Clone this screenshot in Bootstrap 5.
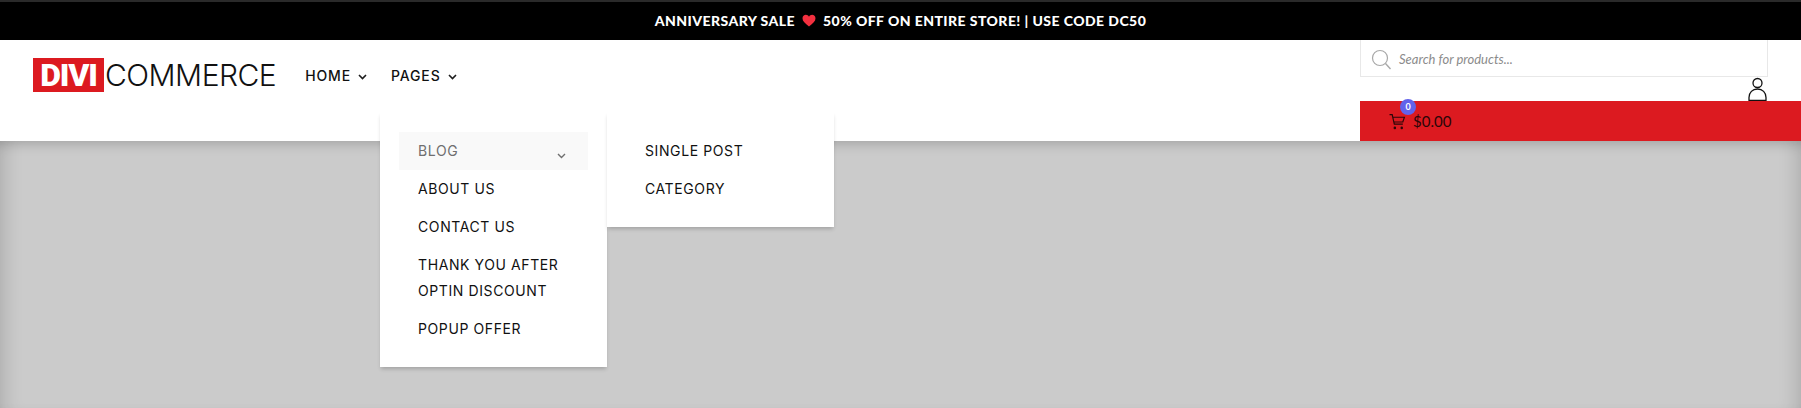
<!DOCTYPE html>
<html lang="en">
<head>
  <meta charset="UTF-8">
  <meta name="viewport" content="width=device-width, initial-scale=1.0">
  <title>Divi Commerce</title>
  <link href="https://cdn.jsdelivr.net/npm/bootstrap@5.3.0/dist/css/bootstrap.min.css" rel="stylesheet">
  <style>
    body {
      background-color: #cbcbcb;
      font-family: Inter, "Liberation Sans", sans-serif;
      overflow: hidden;
    }
    .promo-bar {
      height: 40px;
      background-color: #000;
      border-top: 2px solid #2a2a2a;
      padding-bottom: 2px;
      color: #fff;
      font-family: Lato, "Liberation Sans", sans-serif;
      font-size: 14px;
      font-weight: 900;
      letter-spacing: .44px;
    }
    .promo-bar svg {
      margin: 0 7px;
    }
    .site-header {
      height: 101px;
      background-color: #fff;
      z-index: 2;
    }
    .brand-area {
      padding: 18px 0 0 33px;
    }
    .brand-box {
      width: 71px;
      height: 34px;
      background-color: #dc1a20;
      color: #fff;
      font-family: Roboto, sans-serif;
      font-size: 32px;
      font-weight: 900;
      letter-spacing: -1.2px;
    }
    .brand-word {
      margin-left: 1px;
      color: #111;
      font-size: 30px;
      font-weight: 300;
      letter-spacing: -.5px;
      line-height: 35px;
    }
    .main-links {
      margin-left: 29px;
      gap: 24px;
      height: 34px;
    }
    .main-links a, .fly-menu a {
      color: #111;
      font-size: 14px;
      letter-spacing: .85px;
      text-decoration: none;
    }
    .main-links a {
      font-weight: 500;
    }
    .main-links svg {
      margin-left: 7px;
    }
    .shop-area {
      width: 441px;
    }
    .search-box {
      width: 408px;
      height: 37px;
      border: 1px solid #e8e8e8;
      border-top: 0;
      padding: 3px 0 0 10px;
      gap: 7px;
      color: #8b8b8b;
      font-family: Lato, sans-serif;
      font-size: 13px;
      font-style: italic;
    }
    .account-row {
      height: 24px;
      padding-right: 34px;
    }
    .cart-bar {
      height: 40px;
      background-color: #dc1a20;
      padding-left: 29px;
      gap: 7px;
      color: #2a0608;
      font-family: Lato, sans-serif;
      font-size: 15px;
    }
    .cart-count {
      top: -2px;
      left: 40px;
      width: 16px;
      height: 16px;
      background-color: #6262ea;
      color: #fff;
      font-size: 9px;
      font-weight: 700;
    }
    .fly-menu {
      width: 227px;
      background-color: #fff;
      box-shadow: 0 3px 4px -1px rgba(0, 0, 0, .2);
      z-index: 3;
      top: 112px;
    }
    .menu-first {
      left: 380px;
      height: 255px;
      padding: 20px 19px;
    }
    .menu-second {
      left: 607px;
      height: 115px;
      padding: 20px 19px 0 38px;
    }
    .fly-menu a {
      display: block;
      padding: 6px 19px;
      line-height: 26px;
      position: relative;
      letter-spacing: .6px;
    }
    .menu-second a {
      padding-left: 0;
    }
    .fly-menu a.is-open {
      background-color: #f9f9f9;
      color: #6f6f6f;
    }
    .is-open svg {
      position: absolute;
      right: 22px;
      top: 21px;
    }
    .page-shade {
      height: 267px;
      background-color: #cbcbcb;
      box-shadow: inset 0 10px 12px -6px rgba(0, 0, 0, .16), inset 18px 0 16px -10px rgba(0, 0, 0, .1), inset -18px 0 16px -10px rgba(0, 0, 0, .1);
    }
  </style>
</head>
<body>
  <div class="promo-bar d-flex align-items-center justify-content-center">
    <span>ANNIVERSARY SALE</span>
    <svg width="14" height="13" viewBox="0 0 14 13"><path d="M7 12.5C3 9.5.5 7.300.5 4.300.5 2.200 2.100.8 3.900.8 5.200.8 6.300 1.500 7 2.700 7.700 1.500 8.800.8 10.100.8c1.800 0 3.400 1.400 3.400 3.500 0 3-2.500 5.200-6.500 8.200z" fill="#f3303f"/></svg>
    <span>50% OFF ON ENTIRE STORE! | USE CODE DC50</span>
  </div>

  <header class="site-header d-flex justify-content-between position-relative">
    <div class="brand-area d-flex align-items-start">
      <div class="brand-box d-flex align-items-center justify-content-center">DIVI</div>
      <div class="brand-word">COMMERCE</div>
      <nav class="main-links d-flex align-items-center">
        <a href="#">HOME<svg width="9" height="6" viewBox="0 0 9 6"><path d="M1 1l3.500 3.500L8 1" fill="none" stroke="#1c1c1c" stroke-width="1.600"/></svg></a>
        <a href="#">PAGES<svg width="9" height="6" viewBox="0 0 9 6"><path d="M1 1l3.500 3.500L8 1" fill="none" stroke="#1c1c1c" stroke-width="1.600"/></svg></a>
      </nav>
    </div>
    <div class="shop-area d-flex flex-column">
      <div class="search-box d-flex align-items-center">
        <svg width="21" height="22" viewBox="0 0 21 22"><circle cx="9" cy="9" r="7.500" fill="none" stroke="#a8a8a8" stroke-width="1.200"/><path d="M14.500 14.500l5 5.500" stroke="#a8a8a8" stroke-width="1.400"/></svg>
        <span>Search for products...</span>
      </div>
      <div class="account-row d-flex justify-content-end align-items-end">
        <svg width="19" height="24" viewBox="0 0 19 24"><circle cx="9.500" cy="6" r="4.500" fill="none" stroke="#111" stroke-width="1.300"/><path d="M1 23.500v-3c0-5 3.500-8.500 8.500-8.500s8.500 3.500 8.500 8.500v3z" fill="none" stroke="#111" stroke-width="1.300"/></svg>
      </div>
      <div class="cart-bar d-flex align-items-center position-relative">
        <svg width="17" height="17" viewBox="0 0 16 16"><path d="M.5 1.500h2.500l2 9h8M3.500 4h11l-1.500 4.500H4.500" fill="none" stroke="#2a0608" stroke-width="1.100"/><circle cx="5.500" cy="14" r="1.200" fill="#2a0608"/><circle cx="12" cy="14" r="1.200" fill="#2a0608"/></svg>
        <span>$0.00</span>
        <span class="cart-count position-absolute rounded-circle d-flex align-items-center justify-content-center">0</span>
      </div>
    </div>
  </header>

  <div class="fly-menu menu-first position-absolute">
    <a href="#" class="is-open">BLOG<svg width="9" height="6" viewBox="0 0 9 6"><path d="M1 1l3.500 3.500L8 1" fill="none" stroke="#6f6f6f" stroke-width="1.400"/></svg></a>
    <a href="#">ABOUT US</a>
    <a href="#">CONTACT US</a>
    <a href="#">THANK YOU AFTER OPTIN DISCOUNT</a>
    <a href="#">POPUP OFFER</a>
  </div>
  <div class="fly-menu menu-second position-absolute">
    <a href="#">SINGLE POST</a>
    <a href="#">CATEGORY</a>
  </div>

  <div class="page-shade"></div>

  <script src="https://cdn.jsdelivr.net/npm/bootstrap@5.3.0/dist/js/bootstrap.bundle.min.js"></script>
</body>
</html>
